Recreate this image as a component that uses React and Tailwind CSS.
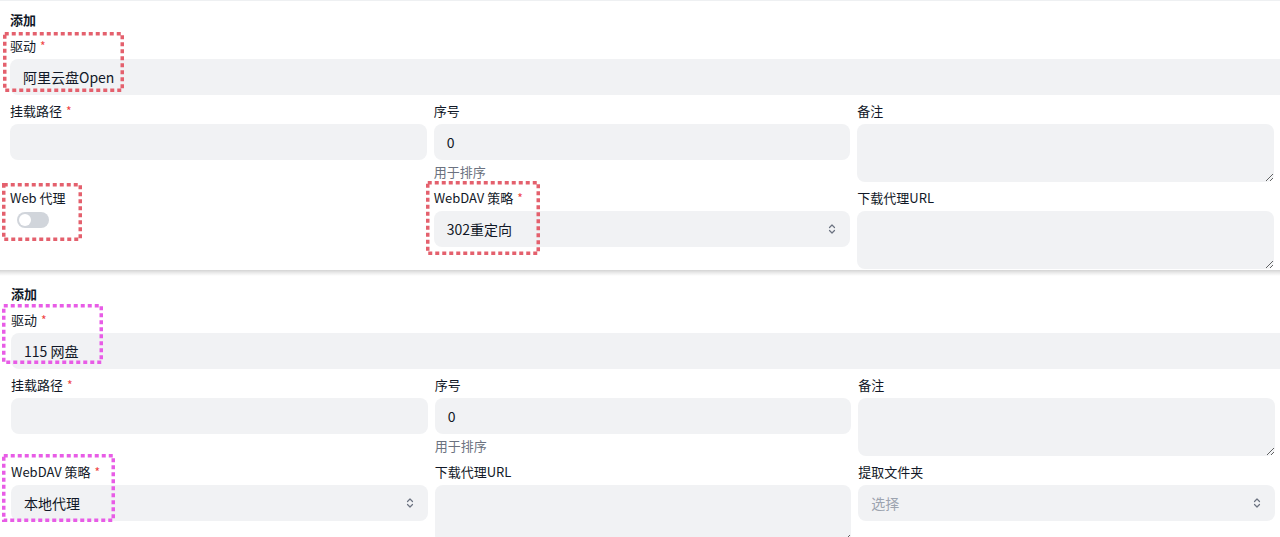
import React from 'react';

const Star = () => (
  <span className="ml-[4px] text-[12px] text-[#ef4444] align-top">*</span>
);

const Field = ({ label, required, hint, children }) => (
  <div className="flex flex-col">
    <div className="mb-[3px] h-5 text-[13px] leading-5 text-[#111827]">
      {label}
      {required && <Star />}
    </div>
    {children}
    {hint && <div className="mt-[2px] text-[13px] leading-5 text-[#6b7280]">{hint}</div>}
  </div>
);

const Input = ({ value }) => (
  <div className="flex h-9 items-center rounded-lg bg-[#f1f2f4] px-[13px] text-sm text-[#111827]">
    {value}
  </div>
);

const Area = () => (
  <textarea
    readOnly
    className="block h-[58px] w-full resize-y rounded-lg bg-[#f1f2f4] outline-none"
  />
);

const UpDown = () => (
  <svg width="8" height="12" viewBox="0 0 8 12" fill="none" stroke="#6b7280" strokeWidth="1.2" strokeLinecap="round" strokeLinejoin="round">
    <polyline points="1.5,4.5 4,2 6.5,4.5" />
    <polyline points="1.5,7.5 4,10 6.5,7.5" />
  </svg>
);

const Select = ({ value, placeholder }) => (
  <div className="flex h-9 items-center justify-between rounded-lg bg-[#f1f2f4] pl-[13px] pr-[14px] text-sm">
    <span className={placeholder ? 'text-[#9ca3af]' : 'text-[#111827]'}>{value}</span>
    <UpDown />
  </div>
);

const Toggle = () => (
  <div className="ml-[7px] mt-[1px] flex h-4 w-8 items-center rounded-full bg-[#d1d5db] px-[2px]">
    <div className="h-3 w-3 rounded-full bg-white" />
  </div>
);

// пунктирні рамки поверх скріншоту
const Mark = ({ className, w, h, color }) => (
  <svg className={`pointer-events-none absolute ${className}`} width={w} height={h}>
    <rect
      x="1.75"
      y="1.75"
      width={w - 3.5}
      height={h - 3.5}
      fill="none"
      stroke={color}
      strokeWidth="3.5"
      strokeDasharray="4 3"
    />
  </svg>
);

const Panel = ({ driver, second, shift }) => (
  <div className={shift ? 'pl-[11px] pt-[8px]' : 'border-t border-[#eef0f2] pb-[1px] pl-[10px] pt-[9px]'}>
    <div className="h-5 text-[13px] font-semibold leading-5 text-[#111827]">添加</div>
    <div className="mt-[6px] w-[1300px]">
      <Field label="驱动" required>
        <Input value={driver} />
      </Field>
    </div>
    <div className="mt-[6px] grid w-[1264px] grid-cols-3 items-start gap-x-[7px] gap-y-[6px]">
      <Field label="挂载路径" required>
        <Input value="" />
      </Field>
      <Field label="序号" hint="用于排序">
        <Input value="0" />
      </Field>
      <Field label="备注">
        <Area />
      </Field>
      {second}
    </div>
  </div>
);

export default function App() {
  return (
    <div
      className="relative h-[537px] w-[1280px] overflow-hidden bg-white"
      style={{ fontFamily: '"Noto Sans CJK SC", "Noto Sans", sans-serif' }}
    >
      <Panel
        driver="阿里云盘Open"
        second={
          <>
            <Field label="Web 代理">
              <Toggle />
            </Field>
            <Field label="WebDAV 策略" required>
              <Select value="302重定向" />
            </Field>
            <Field label="下载代理URL">
              <Area />
            </Field>
          </>
        }
      />
      <div className="h-[6px] bg-gradient-to-b from-[#d4d4d4] via-[#ececec] to-white" />
      <Panel
        shift
        driver="115 网盘"
        second={
          <>
            <Field label="WebDAV 策略" required>
              <Select value="本地代理" />
            </Field>
            <Field label="下载代理URL">
              <Area />
            </Field>
            <Field label="提取文件夹">
              <Select value="选择" placeholder />
            </Field>
          </>
        }
      />

      <Mark className="left-[3px] top-[32px]" w={121} h={60} color="#e4606d" />
      <Mark className="left-[2px] top-[183px]" w={80} h={58} color="#e4606d" />
      <Mark className="left-[426px] top-[181px]" w={114} h={74} color="#e4606d" />
      <Mark className="left-[2px] top-[304px]" w={101} h={60} color="#e85ce6" />
      <Mark className="left-[2px] top-[454px]" w={113} h={68} color="#e85ce6" />
    </div>
  );
}
